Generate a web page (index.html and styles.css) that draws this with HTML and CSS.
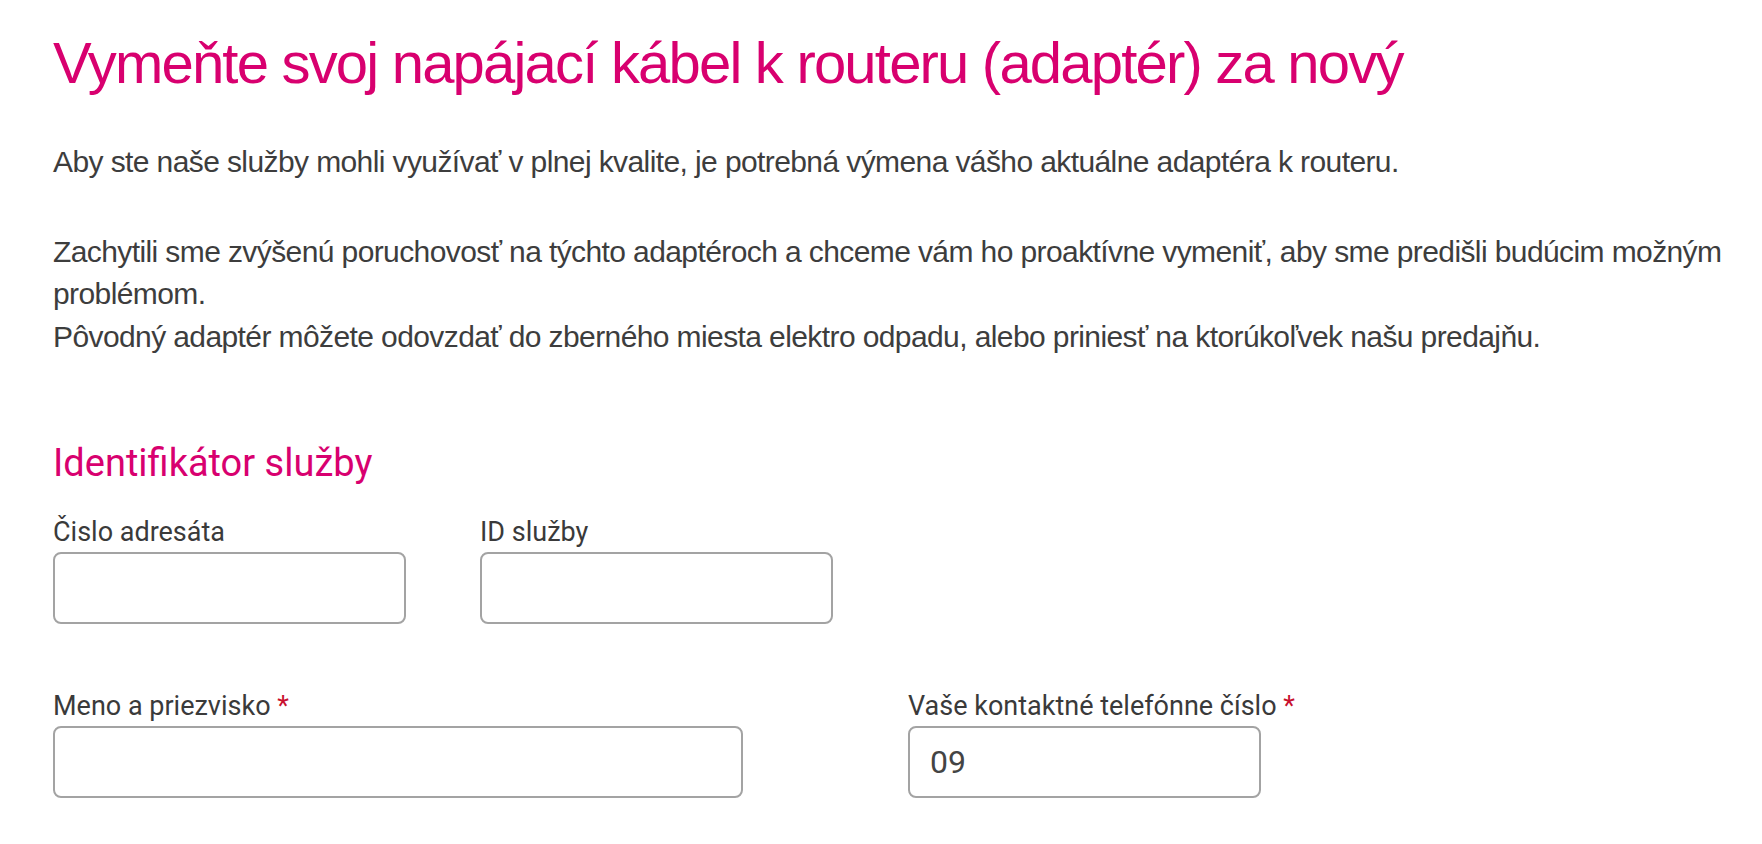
FILE: index.html
```html
<!DOCTYPE html>
<html lang="sk">
<head>
  <meta charset="UTF-8" />
  <meta name="viewport" content="width=device-width, initial-scale=1.0"/>
  <title>Výmena adaptéra | Telekom</title>
  <link rel="stylesheet" href="styles.css">
</head>
<body>

  <div class="page">
    <h1>Vymeňte svoj napájací kábel k routeru (adaptér) za nový</h1>

    <p class="intro">Aby ste naše služby mohli využívať v plnej kvalite, je potrebná výmena vášho aktuálne adaptéra k routeru.</p>

    <p class="intro">Zachytili sme zvýšenú poruchovosť na týchto adaptéroch a chceme vám ho proaktívne vymeniť, aby sme predišli budúcim možným problémom.<br>
      Pôvodný adaptér môžete odovzdať do zberného miesta elektro odpadu, alebo priniesť na ktorúkoľvek našu predajňu.</p>

    <form class="order-form">
      <h2>Identifikátor služby</h2>

      <div class="form-row">
        <div class="field">
          <label for="recipient">Čislo adresáta</label>
          <input type="text" id="recipient" />
        </div>
        <div class="field">
          <label for="serviceId">ID služby</label>
          <input type="text" id="serviceId" />
        </div>
      </div>

      <div class="form-row second">
        <div class="field wide">
          <label for="fullName">Meno a priezvisko <span class="req">*</span></label>
          <input type="text" id="fullName" />
        </div>
        <div class="field">
          <label for="phone">Vaše kontaktné telefónne číslo <span class="req">*</span></label>
          <input type="tel" id="phone" value="09" />
        </div>
      </div>
    </form>
  </div>

</body>
</html>
```

FILE: styles.css
```css
* { margin: 0; padding: 0; box-sizing: border-box; }
body {
  background: #fff;
  color: #3d3d3d;
  font-family: 'Liberation Sans', Arial, sans-serif;
}
.page {
  padding: 25px 10px 0 53px;
}
h1 {
  font-weight: 400;
  font-size: 58px;
  line-height: 76px;
  letter-spacing: -1.8px;
  color: #d8006f;
}
.intro {
  font-size: 30px;
  line-height: 42.5px;
  letter-spacing: -0.6px;
  margin-top: 40px;
}
.intro + .intro { margin-top: 47px; }

.order-form {
  margin-top: 83px;
  font-family: Roboto, 'Liberation Sans', sans-serif;
}
h2 {
  font-weight: 400;
  font-size: 38px;
  line-height: 44px;
  color: #d8006f;
}
.form-row {
  display: flex;
  gap: 74px;
  margin-top: 31px;
}
.form-row.second {
  gap: 165px;
  margin-top: 66px;
}
.field {
  display: flex;
  flex-direction: column;
  gap: 4px;
  width: 353px;
}
.field.wide { width: 690px; }
label {
  font-size: 27px;
  line-height: 32px;
  white-space: nowrap;
  color: #3a3a3a;
}
.req { color: #c8102e; }
input {
  height: 72px;
  width: 100%;
  border: 2px solid #a3a3a3;
  border-radius: 8px;
  padding: 0 20px;
  font-family: Roboto, 'Liberation Sans', sans-serif;
  font-size: 32px;
  color: #444;
  background: #fff;
}
```
